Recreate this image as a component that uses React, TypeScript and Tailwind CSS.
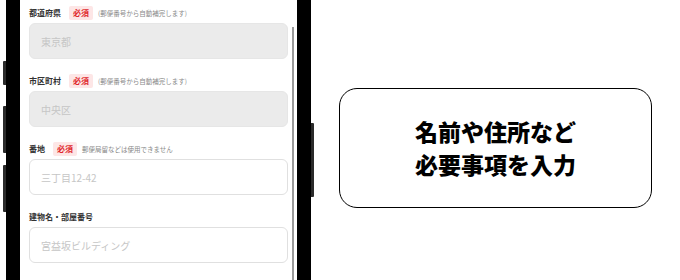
type Field = {
  label: string;
  required?: boolean;
  note?: string;
  placeholder: string;
  disabled?: boolean;
};

const fields: Field[] = [
  { label: "都道府県", required: true, note: "(郵便番号から自動補完します)", placeholder: "東京都", disabled: true },
  { label: "市区町村", required: true, note: "(郵便番号から自動補完します)", placeholder: "中央区", disabled: true },
  { label: "番地", required: true, note: "郵便局留などは使用できません", placeholder: "三丁目12-42" },
  { label: "建物名・部屋番号", placeholder: "宮益坂ビルディング" },
];

function FormField({ field }: { field: Field }) {
  return (
    <div className="mb-[15px] flex flex-col gap-[3px]">
      <div className="flex h-[14px] items-center">
        <span className="text-[8px] font-bold leading-none text-[#333]">{field.label}</span>
        {field.required ? (
          <span className="ml-[8px] flex h-[14px] items-center rounded-[2px] bg-[#fde6e6] px-[4px] text-[8px] font-bold leading-none text-[#e0262b]">
            必須
          </span>
        ) : null}
        {field.note ? (
          <span className="ml-[5px] text-[6.5px] leading-none text-[#888]">{field.note}</span>
        ) : null}
      </div>
      <input
        type="text"
        disabled={field.disabled}
        placeholder={field.placeholder}
        className={
          field.disabled
            ? "h-[36px] w-full rounded-[6px] border border-[#e6e6e6] bg-[#ebebeb] px-[11px] text-[10px] placeholder:text-[#c6c6c6] outline-none"
            : "h-[36px] w-full rounded-[6px] border border-[#e0e0e0] bg-white px-[11px] text-[10px] placeholder:text-[#c6c6c6] outline-none"
        }
      />
    </div>
  );
}

export default function App() {
  return (
    <div className="relative flex h-[280px] w-[680px] items-start overflow-hidden bg-white font-['Noto_Sans_CJK_JP',sans-serif]">
      <div className="relative ml-[6px] h-[280px] w-[305px] bg-black px-[14px]">
        <div className="absolute left-[-3px] top-[61px] h-[24px] w-[3px] rounded-l-[1px] bg-[#2a2a2a]" />
        <div className="absolute left-[-3px] top-[106px] h-[47px] w-[3px] rounded-l-[1px] bg-[#2a2a2a]" />
        <div className="absolute left-[-3px] top-[165px] h-[47px] w-[3px] rounded-l-[1px] bg-[#2a2a2a]" />
        <div className="absolute right-[-3px] top-[123px] h-[74px] w-[3px] rounded-r-[1px] bg-[#2a2a2a]" />

        <div className="relative h-full bg-white px-[9px] pt-[6px]">
          {fields.map((field) => (
            <FormField key={field.label} field={field} />
          ))}
          <div className="absolute right-[3px] top-[27px] bottom-0 w-[2px] bg-[#9a9a9a]" />
        </div>
      </div>

      <div className="ml-[28px] mt-[88px] flex h-[120px] w-[313px] items-center justify-center rounded-[18px] border-[1.5px] border-black">
        <p className="text-center text-[23px] font-black leading-[33px] text-black">
          名前や住所など
          <br />
          必要事項を入力
        </p>
      </div>
    </div>
  );
}
